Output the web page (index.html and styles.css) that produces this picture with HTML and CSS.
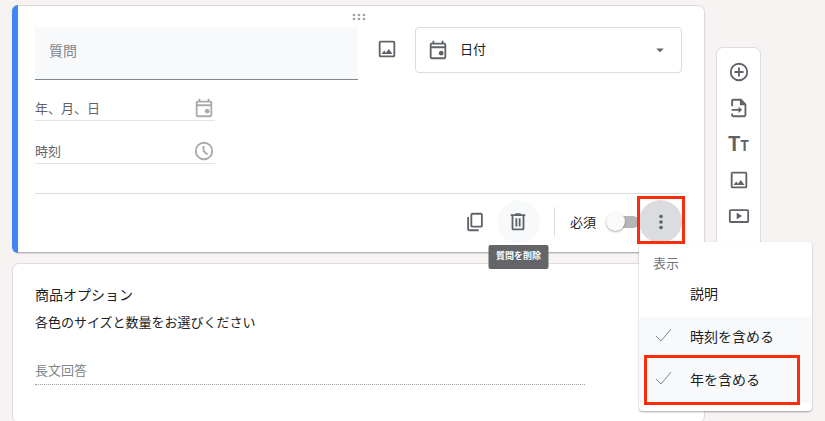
FILE: index.html
```
<!DOCTYPE html>
<html lang="ja">
<head>
  <meta charset="UTF-8">
  <meta name="viewport" content="width=device-width, initial-scale=1.0">
  <title>質問</title>
  <link rel="stylesheet" href="styles.css">
</head>
<body>
  <div class="page">
    <main class="cards">
      <section class="card card-active">
        <div class="drag-handle">
          <svg width="14" height="8" viewBox="0 0 14 8" fill="#9aa0a6">
            <circle cx="2" cy="2" r="1.3"/><circle cx="7" cy="2" r="1.3"/><circle cx="12" cy="2" r="1.3"/>
            <circle cx="2" cy="6" r="1.3"/><circle cx="7" cy="6" r="1.3"/><circle cx="12" cy="6" r="1.3"/>
          </svg>
        </div>

        <div class="question-row">
          <input class="question-input" type="text" placeholder="質問" aria-label="質問">
          <button class="image-button" type="button">
            <svg class="icon" viewBox="0 0 24 24">
              <rect class="line" x="4" y="4" width="16" height="16" rx="1"/>
              <path d="M6 17.500l3-4 2 2.500 3-4 4 5.500z"/>
            </svg>
          </button>
          <div class="type-select">
            <svg class="icon" viewBox="0 0 24 24">
              <path d="M19 4h-1V2h-2v2H8V2H6v2H5a2 2 0 0 0-2 2v14a2 2 0 0 0 2 2h14a2 2 0 0 0 2-2V6a2 2 0 0 0-2-2zm0 16H5V10h14v10zm0-12H5V6h14v2z"/>
              <circle cx="15.500" cy="15.500" r="2.600"/>
            </svg>
            <select aria-label="日付">
              <option>日付</option>
            </select>
            <svg class="caret" viewBox="0 0 24 24"><path d="M7 10l5 5 5-5z"/></svg>
          </div>
        </div>

        <div class="answer-row">
          <input type="text" placeholder="年、月、日" aria-label="年、月、日" disabled>
          <svg class="icon" viewBox="0 0 24 24">
            <path d="M19 4h-1V2h-2v2H8V2H6v2H5a2 2 0 0 0-2 2v14a2 2 0 0 0 2 2h14a2 2 0 0 0 2-2V6a2 2 0 0 0-2-2zm0 16H5V10h14v10zm0-12H5V6h14v2z"/>
            <circle cx="15.500" cy="15.500" r="2.600"/>
          </svg>
        </div>
        <div class="answer-row">
          <input type="text" placeholder="時刻" aria-label="時刻" disabled>
          <svg class="icon" viewBox="0 0 24 24">
            <circle class="line" cx="12" cy="12" r="9"/>
            <path class="line" d="M11.500 6.500V12l4.500 4"/>
          </svg>
        </div>

        <div class="card-footer">
          <button class="round-button" type="button">
            <svg class="icon" viewBox="0 0 24 24">
              <rect class="line" x="8" y="3" width="11.500" height="14" rx="1"/>
              <path class="line" d="M4.500 6.500V20a1 1 0 0 0 1 1H16"/>
            </svg>
          </button>
          <div class="delete">
            <button class="round-button hovered" type="button" aria-describedby="delete-tip">
              <svg class="icon" viewBox="0 0 24 24">
                <path class="line" d="M4 4.500h16M6 5v14a1 1 0 0 0 1 1h10a1 1 0 0 0 1-1V5M10.200 8v9M13.800 8v9"/>
                <path d="M9 2.500h6v2H9z"/>
              </svg>
            </button>
            <span class="tooltip" id="delete-tip" role="tooltip">質問を削除</span>
          </div>
          <span class="separator"></span>
          <label class="required">必須 <input class="toggle" type="checkbox"></label>
          <div class="more">
            <button class="round-button pressed" type="button" aria-haspopup="true" aria-expanded="true">
              <svg class="icon" viewBox="0 0 24 24">
                <circle cx="12" cy="6" r="2"/><circle cx="12" cy="12" r="2"/><circle cx="12" cy="18" r="2"/>
              </svg>
            </button>
            <div class="menu" role="menu">
              <div class="menu-title">表示</div>
              <button class="menu-item" type="button" role="menuitemcheckbox" aria-checked="false">
                <span class="check"></span>説明
              </button>
              <button class="menu-item checked" type="button" role="menuitemcheckbox" aria-checked="true">
                <svg class="check" viewBox="0 0 22 22"><path d="M3 11l5 5L18 4"/></svg>時刻を含める
              </button>
              <button class="menu-item checked" type="button" role="menuitemcheckbox" aria-checked="true">
                <svg class="check" viewBox="0 0 22 22"><path d="M3 11l5 5L18 4"/></svg>年を含める
                <span class="mark mark-item"></span>
              </button>
            </div>
            <span class="mark mark-more"></span>
          </div>
        </div>
      </section>

      <section class="card card-option">
        <h2>商品オプション</h2>
        <p>各色のサイズと数量をお選びください</p>
        <input class="long-answer" type="text" placeholder="長文回答" aria-label="長文回答" disabled>
      </section>
    </main>

    <nav class="toolbar">
      <button type="button">
        <svg class="icon" viewBox="0 0 24 24">
          <circle class="line" cx="12" cy="12" r="9"/>
          <path class="line" d="M12 7v10M7 12h10"/>
        </svg>
      </button>
      <button type="button">
        <svg class="icon" viewBox="0 0 24 24">
          <path class="line" d="M4.500 10V4a1 1 0 0 1 1-1H14l5 5v12a1 1 0 0 1-1 1H5.500a1 1 0 0 1-1-1v-2M4 14h9"/>
          <path d="M13 3v6h6zM11.500 10.500L15.500 14l-4 3.500z"/>
        </svg>
      </button>
      <button type="button" class="title-button">T<small>T</small></button>
      <button type="button">
        <svg class="icon" viewBox="0 0 24 24">
          <rect class="line" x="4" y="4" width="16" height="16" rx="1"/>
          <path d="M6 17.500l3-4 2 2.500 3-4 4 5.500z"/>
        </svg>
      </button>
      <button type="button">
        <svg class="icon" viewBox="0 0 24 24">
          <rect class="line" x="2" y="5.500" width="20" height="13" rx="1"/>
          <path d="M9.500 8.500v7l6-3.500z"/>
        </svg>
      </button>
    </nav>
  </div>
</body>
</html>
```
FILE: styles.css
```
* {
  box-sizing: border-box;
  margin: 0;
  padding: 0;
}

body {
  font-family: Roboto, "Noto Sans CJK JP", sans-serif;
  font-size: 13px;
  color: #202124;
  background-color: #f7f3f2;
}

button,
input,
select {
  font: inherit;
  color: inherit;
  border: none;
  background: none;
}

button {
  display: flex;
  align-items: center;
  justify-content: center;
  cursor: pointer;
}

.icon {
  display: block;
  flex: none;
  width: 22px;
  height: 22px;
  fill: #5f6368;
}

.icon .line {
  fill: none;
  stroke: #5f6368;
  stroke-width: 2;
}

.page {
  display: flex;
  align-items: flex-start;
  gap: 11px;
  padding: 5px 64px 0 12px;
}

.cards {
  flex: 1;
  display: flex;
  flex-direction: column;
  gap: 10px;
}

.card {
  position: relative;
  padding: 0 22px;
  background-color: #fff;
  border: 1px solid #dadce0;
  border-radius: 7px;
}

.card-active {
  z-index: 1;
  border-bottom-color: #b4b6b9;
  box-shadow: 0 1px 1px rgba(0, 0, 0, 0.12);
}

.card-active::before {
  content: "";
  position: absolute;
  top: -1px;
  bottom: -1px;
  left: -1px;
  width: 6px;
  background-color: #4285f4;
  border-radius: 7px 0 0 7px;
}

.drag-handle {
  display: flex;
  align-items: center;
  justify-content: center;
  height: 21px;
}

.question-row {
  display: flex;
  align-items: flex-start;
}

.question-input {
  flex: 1;
  min-width: 0;
  height: 53px;
  padding: 0 14px 4px;
  font-size: 14px;
  background-color: #f8f9fa;
  border-bottom: 1px solid #80868b;
}

input::placeholder {
  color: #80868b;
  opacity: 1;
}

.image-button {
  width: 57px;
  height: 44px;
}

.type-select {
  position: relative;
  width: 267px;
}

.type-select select {
  width: 100%;
  height: 46px;
  padding: 0 44px 2px;
  appearance: none;
  border: 1px solid #dadce0;
  border-radius: 4px;
}

.type-select .icon,
.type-select .caret {
  position: absolute;
  top: 12px;
  left: 12px;
  pointer-events: none;
}

.type-select .caret {
  top: 14px;
  left: auto;
  right: 13px;
  width: 18px;
  height: 18px;
  fill: #5f6368;
}

.answer-row {
  display: flex;
  align-items: center;
  width: 180px;
  margin-top: 16px;
  border-bottom: 1px solid #e3e4e6;
}

.answer-row + .answer-row {
  margin-top: 18px;
}

.answer-row input {
  flex: 1;
  min-width: 0;
  height: 24px;
}

.answer-row input::placeholder {
  color: #5f6368;
}

.answer-row .icon {
  fill: #a8aaad;
}

.answer-row .icon .line {
  fill: none;
  stroke: #a8aaad;
}

.card-footer {
  display: flex;
  align-items: center;
  justify-content: flex-end;
  margin-top: 29px;
  padding: 6px 0 9px;
  border-top: 1px solid #dadce0;
}

.round-button {
  width: 43px;
  height: 43px;
  border-radius: 50%;
}

.hovered {
  background-color: #f8f9fa;
}

.pressed {
  background-color: #dadce0;
}

.delete,
.more {
  position: relative;
}

.tooltip {
  position: absolute;
  z-index: 1;
  top: 45px;
  left: 50%;
  padding: 0 7px 1px;
  transform: translateX(-50%);
  font-size: 9px;
  font-weight: bold;
  line-height: 23px;
  white-space: nowrap;
  color: #fff;
  background-color: #636568;
  border-radius: 2px;
}

.separator {
  width: 1px;
  height: 29px;
  margin: 0 15px 0 14px;
  background-color: #dadce0;
}

.required {
  display: flex;
  align-items: center;
  gap: 10px;
}

.toggle {
  position: relative;
  width: 33px;
  height: 19px;
  appearance: none;
}

.toggle::before {
  content: "";
  position: absolute;
  top: 4px;
  left: 4px;
  right: 0;
  height: 12px;
  background-color: #b5b5b5;
  border-radius: 6px;
}

.toggle::after {
  content: "";
  position: absolute;
  top: 0;
  left: 0;
  width: 19px;
  height: 19px;
  background-color: #fafafa;
  border-radius: 50%;
  box-shadow: 0 1px 2px rgba(0, 0, 0, 0.35);
}

.menu {
  position: absolute;
  top: 42px;
  left: 0;
  width: 173px;
  padding: 12px 0 8px;
  background-color: #fff;
  border-radius: 4px;
  box-shadow: 0 1px 2px rgba(0, 0, 0, 0.35);
}

.menu-title {
  padding: 0 14px;
  line-height: 20px;
  color: #70757a;
}

.menu-item {
  position: relative;
  justify-content: flex-start;
  gap: 15px;
  width: 100%;
  height: 43px;
  padding: 0 14px 5px;
  font-size: 14px;
}

.menu-item.checked {
  background-color: #f8f9fa;
}

.check {
  width: 22px;
  height: 22px;
  fill: none;
  stroke: #80868b;
}

/* red highlight frames */
.mark {
  position: absolute;
  border: 3px solid #fa2c0c;
  pointer-events: none;
}

.mark-more {
  top: -4px;
  right: -3px;
  bottom: -1px;
  left: -2px;
}

.mark-item {
  top: -5px;
  right: 12px;
  bottom: -2px;
  left: 5px;
}

.card-option {
  padding: 21px 22px 37px;
}

.card-option h2 {
  font-size: 14px;
  font-weight: normal;
  line-height: 20px;
}

.card-option p {
  margin-top: 8px;
  line-height: 20px;
}

.long-answer {
  display: block;
  width: 85%;
  height: 29px;
  margin-top: 23px;
  border-bottom: 1px dotted #9aa0a6;
}

.toolbar {
  width: 45px;
  margin-top: 42px;
  padding: 6px 0 24px;
  background-color: #fff;
  border: 1px solid #dadce0;
  border-radius: 7px;
}

.toolbar button {
  width: 100%;
  height: 36px;
}

.toolbar .title-button {
  align-items: baseline;
  font-size: 20px;
  font-weight: bold;
  line-height: 36px;
  color: #5f6368;
}

.title-button small {
  font-size: 14px;
}
```
